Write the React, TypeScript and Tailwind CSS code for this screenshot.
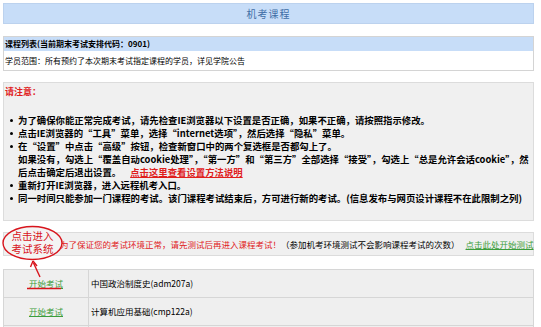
const font = '"Noto Sans CJK SC", "Noto Sans", sans-serif'

const notes: React.ReactNode[] = [
  '为了确保你能正常完成考试，请先检查IE浏览器以下设置是否正确，如果不正确，请按照指示修改。',
  '点击IE浏览器的“工具”菜单，选择“internet选项”，然后选择“隐私”菜单。',
  <>
    <div>在“设置”中点击“高级”按钮，检查新窗口中的两个复选框是否都勾上了。</div>
    <div>如果没有，勾选上“覆盖自动cookie处理”，“第一方”和“第三方”全部选择“接受”，勾选上“总是允许会话cookie”，然</div>
    <div>
      后点击确定后退出设置。
      <span className="ml-[9px] text-[#e0201c] underline">点击这里查看设置方法说明</span>
    </div>
  </>,
  '重新打开IE浏览器，进入远程机考入口。',
  '同一时间只能参加一门课程的考试。该门课程考试结束后，方可进行新的考试。(信息发布与网页设计课程不在此限制之列)',
]

const courses = ['中国政治制度史(adm207a)', '计算机应用基础(cmp122a)', '']

export default function App() {
  return (
    <div className="relative w-[541px] h-[327px] overflow-hidden bg-white text-black" style={{ fontFamily: font }}>
      <div className="ml-[3px] w-[531px] pt-[3px]">
        {/* title */}
        <div className="h-[21px] bg-[#c7ddf8] border border-[#bcd2ee] flex items-center justify-center text-[10px] tracking-[1px] text-[#3f6ea6]">
          机考课程
        </div>

        {/* course list */}
        <div className="mt-[12px] border border-[#d4d4d4]">
          <div className="h-[14px] bg-[#c7ddf8] px-[1px] flex items-center text-[8px] font-bold">
            课程列表(当前期末考试安排代码：0901)
          </div>
          <div className="h-[19px] bg-white px-[1px] flex items-center text-[8px]">
            学员范围：所有预约了本次期末考试指定课程的学员，详见学院公告
          </div>
        </div>

        {/* notice */}
        <div className="mt-[11px] h-[139px] bg-[#f0f0f0] border border-[#dcdcdc] pt-[3px]">
          <div className="px-[1px] text-[9px] font-bold leading-[12px] text-[#e0201c]">请注意：</div>
          <ul className="mt-[16px] text-[9.4px] font-bold leading-[13px] whitespace-nowrap">
            {notes.map((n, i) => (
              <li key={i} className="flex">
                <span className="w-[14px] shrink-0 flex justify-center">
                  <span className="mt-[5px] w-[3px] h-[3px] rounded-full bg-black" />
                </span>
                <div>{n}</div>
              </li>
            ))}
          </ul>
        </div>

        {/* test bar */}
        <div className="mt-[11px] h-[24px] bg-[#f0f0f0] border border-[#dcdcdc] pl-[56px] flex items-center text-[8.5px] whitespace-nowrap">
          <span className="text-[#e0201c]">为了保证您的考试环境正常，请先测试后再进入课程考试！</span>
          <span>（参加机考环境测试不会影响课程考试的次数）</span>
          <span className="ml-[6px] text-[#3c9d3c] underline">点击此处开始测试</span>
        </div>

        {/* courses */}
        <table className="mt-[13px] w-full border-collapse bg-[#efefef] text-[8.5px]">
          <tbody>
            {courses.map((c, i) => (
              <tr key={i} className="h-[28px]">
                <td className="w-[85px] border border-[#d6d6d6] text-center">
                  {c && <span className="text-[#3c9d3c] underline">开始考试</span>}
                </td>
                <td className="border border-[#d6d6d6] pl-[2px]">{c}</td>
              </tr>
            ))}
          </tbody>
        </table>
      </div>

      {/* hand-drawn annotation */}
      <svg className="absolute left-0 top-0 pointer-events-none" width="541" height="327">
        <ellipse cx="32.5" cy="243" rx="29.5" ry="16.5" fill="#f4f4f4" stroke="#d8141c" strokeWidth="1.4" />
        <line x1="40" y1="277" x2="33.5" y2="263" stroke="#d8141c" strokeWidth="1.4" />
        <path d="M33 261 L30.5 267 M33 261 L37 266" stroke="#d8141c" strokeWidth="1.4" fill="none" />
        <line x1="27" y1="288.5" x2="61" y2="288.5" stroke="#d8141c" strokeWidth="1.6" />
      </svg>
      <p className="absolute left-[8px] top-[230px] w-[49px] text-center text-[10.5px] leading-[12.5px] text-[#d8141c]">
        点击进入
        <br />
        考试系统
      </p>
    </div>
  )
}
